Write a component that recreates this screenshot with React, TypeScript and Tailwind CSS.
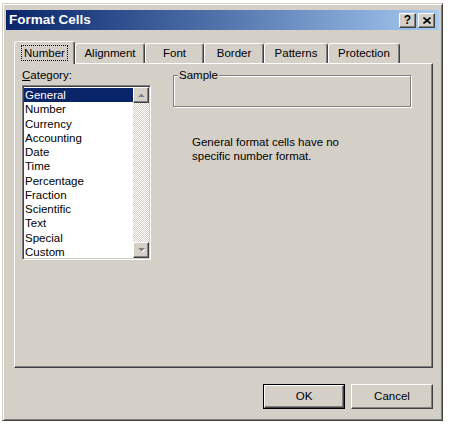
import React from "react";

const raised =
  "border border-t-white border-l-white border-r-[#404040] border-b-[#404040] shadow-[inset_-1px_-1px_0_#808080]";

const categories = [
  "General",
  "Number",
  "Currency",
  "Accounting",
  "Date",
  "Time",
  "Percentage",
  "Fraction",
  "Scientific",
  "Text",
  "Special",
  "Custom",
];

const tabs = [
  { label: "Number", w: "w-[61px]" },
  { label: "Alignment", w: "w-[70px]" },
  { label: "Font", w: "w-[59px]" },
  { label: "Border", w: "w-[60px]" },
  { label: "Patterns", w: "w-[64px]" },
  { label: "Protection", w: "w-[72px]" },
];

const ScrollArrow = ({ down }: { down?: boolean }) => (
  <div className={`w-[16px] h-[16px] bg-[#d4d0c8] flex items-center justify-center ${raised}`}>
    <svg width="7" height="4" viewBox="0 0 7 4">
      {down ? (
        <>
          <polygon points="1,1 8,1 4.5,4.5" fill="#fff" />
          <polygon points="0,0 7,0 3.5,3.5" fill="#808080" />
        </>
      ) : (
        <>
          <polygon points="1,4.5 8,4.5 4.5,1" fill="#fff" />
          <polygon points="0,4 7,4 3.5,0.5" fill="#808080" />
        </>
      )}
    </svg>
  </div>
);

const TitleButton = ({ children }: { children: React.ReactNode }) => (
  <div
    className={`w-[17px] h-[15px] bg-[#d4d0c8] flex items-center justify-center text-[12px] font-bold leading-none text-black ${raised}`}
  >
    {children}
  </div>
);

const App = () => {
  return (
    <div className="w-[449px] h-[424px] bg-white pt-[3px] pl-[2px] font-['Liberation_Sans',Arial,sans-serif] text-[11.5px] text-black">
      <div className="w-[441px] h-[418px] bg-[#d4d0c8] border border-t-[#d4d0c8] border-l-[#d4d0c8] border-r-[#404040] border-b-[#404040] shadow-[inset_1px_1px_0_#fff,inset_-1px_-1px_0_#808080] p-[3px] flex flex-col">
        {/* Title bar */}
        <div className="h-[20px] mt-[3px] bg-linear-to-r from-[#0a246a] to-[#a6caf0] flex items-center pl-[3px] pr-[4px]">
          <span className="text-white font-bold text-[13.5px]">Format Cells</span>
          <div className="ml-auto flex gap-[2px]">
            <TitleButton>?</TitleButton>
            <TitleButton>
              <svg width="8" height="7" viewBox="0 0 8 7">
                <path d="M0.5 0.5 L7.5 6.5 M7.5 0.5 L0.5 6.5" stroke="#000" strokeWidth="1.6" />
              </svg>
            </TitleButton>
          </div>
        </div>

        <div className="pl-[8px] pr-[6px]">
          {/* Tabs */}
          <div className="mt-[11px] h-[22px] flex items-end">
            {tabs.map((t, i) =>
              i === 0 ? (
                <div
                  key={t.label}
                  className={`${t.w} h-[23px] -mb-[1px] relative z-10 bg-[#d4d0c8] rounded-t-[3px] border-l border-t border-r border-l-white border-t-white border-r-[#404040] shadow-[inset_-1px_0_0_#808080] flex items-center justify-center`}
                >
                  <span className="border border-dotted border-black px-[2px] leading-[14px]">{t.label}</span>
                </div>
              ) : (
                <div
                  key={t.label}
                  className={`${t.w} h-[20px] bg-[#d4d0c8] rounded-t-[3px] border-l border-t border-r border-l-white border-t-white border-r-[#404040] shadow-[inset_-1px_0_0_#808080] flex items-center justify-center`}
                >
                  {t.label}
                </div>
              )
            )}
          </div>

          {/* Panel */}
          <div className="h-[305px] border border-t-white border-l-white border-r-[#404040] border-b-[#404040] shadow-[inset_-1px_-1px_0_#808080] pt-[4px] pl-[7px] flex">
            <div className="w-[129px]">
              <div className="leading-[14px] h-[14px]">
                <span className="underline">C</span>ategory:
              </div>
              <div className="mt-[3px] h-[175px] border border-t-[#808080] border-l-[#808080] border-r-white border-b-white shadow-[inset_1px_1px_0_#404040,inset_-1px_-1px_0_#d4d0c8] p-[1px] flex">
                <div className="flex-1 bg-white pt-[1px]">
                  {categories.map((c, i) => (
                    <div
                      key={c}
                      className={`h-[14.25px] leading-[14px] pl-[1px] ${
                        i === 0 ? "bg-[#0a246a] text-white" : ""
                      }`}
                    >
                      {c}
                    </div>
                  ))}
                </div>
                <div className="w-[16px] flex flex-col bg-[repeating-conic-gradient(#d4d0c8_0_25%,#fff_0_50%)] bg-[length:2px_2px]">
                  <ScrollArrow />
                  <div className="flex-1" />
                  <ScrollArrow down />
                </div>
              </div>
            </div>

            <div className="ml-[22px] pt-[7px]">
              <div className="relative w-[238px] h-[32px] border border-[#808080] shadow-[1px_1px_0_#fff,inset_1px_1px_0_#fff]">
                <span className="absolute -top-[8px] left-[4px] bg-[#d4d0c8] px-[1px] leading-[14px]">Sample</span>
              </div>
              <div className="mt-[28px] ml-[19px] leading-[14px]">
                <div>General format cells have no</div>
                <div>specific number format.</div>
              </div>
            </div>
          </div>

          {/* Buttons */}
          <div className="mt-[16px] flex justify-end gap-[6px]">
            <div className="border border-black">
              <div className={`w-[80px] h-[23px] bg-[#d4d0c8] flex items-center justify-center ${raised}`}>OK</div>
            </div>
            <div className={`w-[82px] h-[25px] bg-[#d4d0c8] flex items-center justify-center ${raised}`}>Cancel</div>
          </div>
        </div>
      </div>
    </div>
  );
};

export default App;
